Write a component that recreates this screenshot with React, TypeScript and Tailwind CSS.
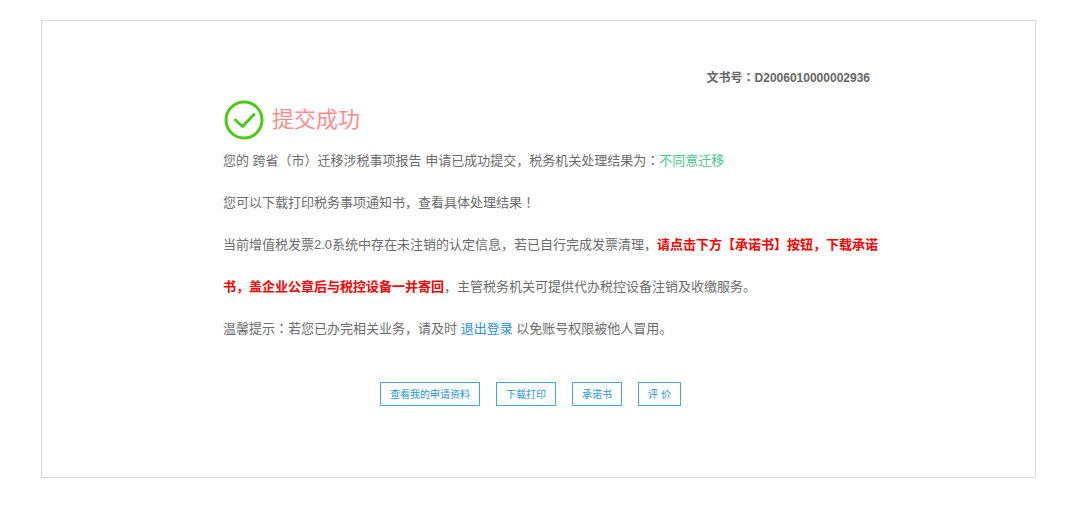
import type { ReactNode } from "react";

const actions = ["查看我的申请资料", "下载打印", "承诺书", "评 价"];

// centred full-width colon and exclamation mark
const Mark = ({ children }: { children: ReactNode }) => {
  return (
    <span className="font-['Liberation_Sans','Noto_Sans_CJK_JP',sans-serif] leading-none">
      {children}
    </span>
  );
};

const SuccessIcon = () => {
  return (
    <svg
      className="w-10 h-10 shrink-0"
      viewBox="0 0 40 40"
      fill="none"
      stroke="#4ec913"
      aria-hidden="true"
    >
      <circle cx="20" cy="20" r="18" strokeWidth="3" />
      <path
        d="M11.5 20L18.5 26.5L30 14.5"
        strokeWidth="3"
        strokeLinecap="round"
        strokeLinejoin="round"
      />
    </svg>
  );
};

const App = () => {
  return (
    <main className="pt-5 pb-8 pl-[41px] pr-11 bg-white font-['Liberation_Sans','Noto_Sans_CJK_SC',sans-serif] text-[#666]">
      <section className="border border-[#d9d9d9] pt-[45px] pb-[71px]">
        <div className="ml-[181px] max-w-[660px]">
          <p className="text-[12px] leading-6 font-bold text-right pr-[13px]">
            文书号<Mark>：</Mark>D2006010000002936
          </p>
          <div className="flex items-center gap-2 mt-[10px] pl-px">
            <SuccessIcon />
            <h1 className="text-[22px] leading-10 text-[#ff8c8c]">提交成功</h1>
          </div>
          <div className="text-[13px] leading-[42px] text-[#6c6c6c]">
            <p>
              您的 跨省（市）迁移涉税事项报告 申请已成功提交，税务机关处理结果为
              <Mark>：</Mark>
              <span className="text-[#42cb88]">不同意迁移</span>
            </p>
            <p>
              您可以下载打印税务事项通知书，查看具体处理结果<Mark>！</Mark>
            </p>
            <p>
              当前增值税发票2.0系统中存在未注销的认定信息，若已自行完成发票清理，
              <strong className="font-bold text-[#ff0000]">
                请点击下方【承诺书】按钮，下载承诺书，盖企业公章后与税控设备一并寄回
              </strong>
              ，主管税务机关可提供代办税控设备注销及收缴服务。
            </p>
            <p>
              温馨提示<Mark>：</Mark>若您已办完相关业务，请及时{" "}
              <a href="#logout" className="text-[#2490e3]">
                退出登录
              </a>{" "}
              以免账号权限被他人冒用。
            </p>
          </div>
        </div>
        <div className="flex justify-center gap-4 mt-8 mr-4">
          {actions.map((label) => (
            <button
              key={label}
              type="button"
              className="h-6 px-[9px] border border-[#45a9dd] text-[10px] text-[#2398d8] bg-white cursor-pointer"
            >
              {label}
            </button>
          ))}
        </div>
      </section>
    </main>
  );
};

export default App;
